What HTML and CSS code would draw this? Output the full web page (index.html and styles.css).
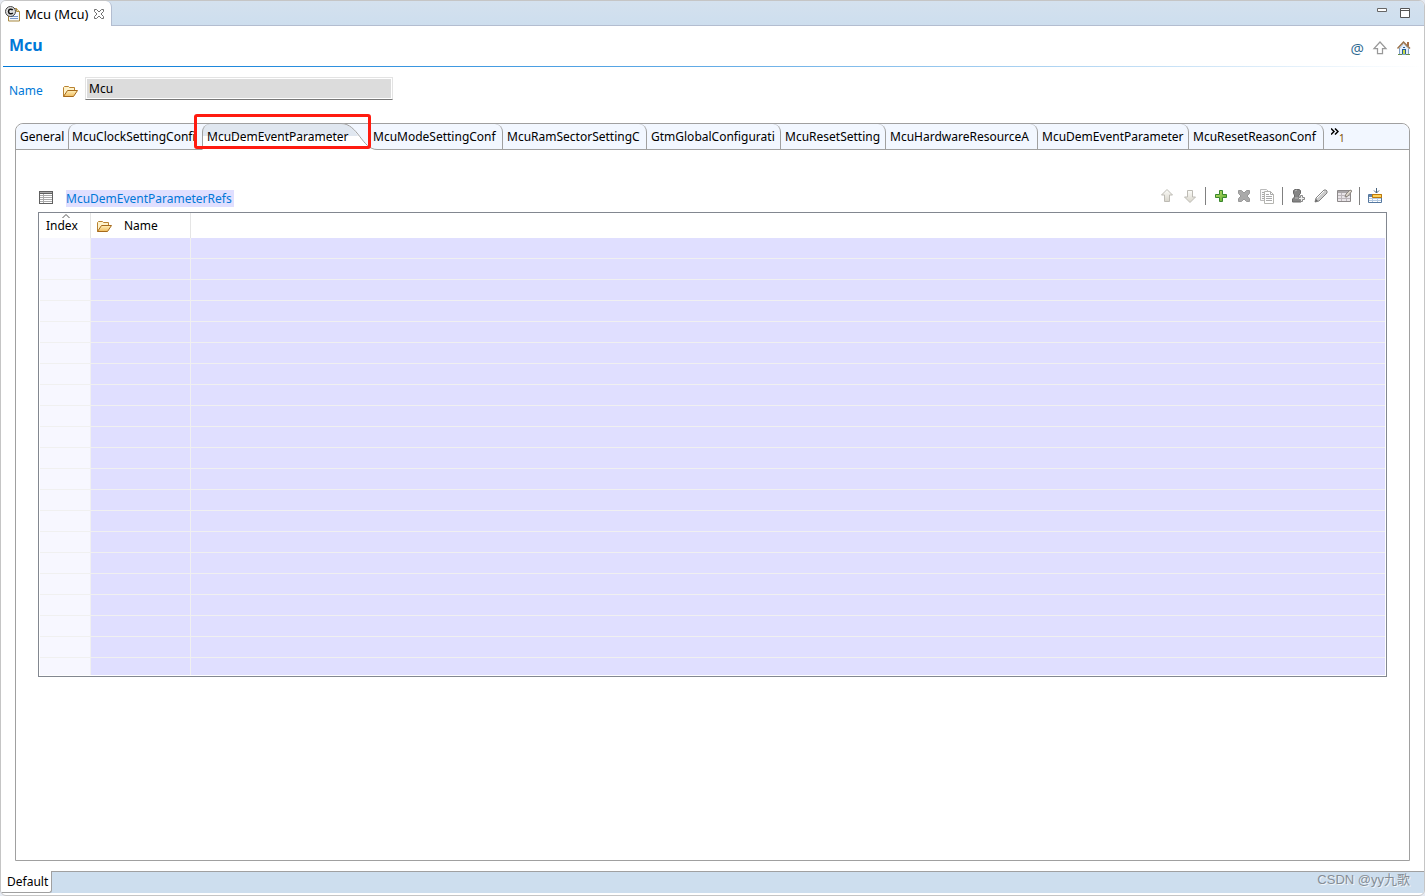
FILE: index.html
```html
<!DOCTYPE html>
<html lang="en">
<head>
<meta charset="utf-8">
<title>Mcu (Mcu)</title>
<link rel="stylesheet" href="styles.css">
</head>
<body>
<svg class="defs" aria-hidden="true">
  <defs>
    <linearGradient id="gold" x1="0" y1="0" x2="0" y2="1"><stop offset="0" stop-color="#fff0bb"/><stop offset="1" stop-color="#efbb5d"/></linearGradient>
    <linearGradient id="silver" x1="0" y1="0" x2="0" y2="1"><stop offset="0" stop-color="#fcfcf9"/><stop offset="1" stop-color="#d8d5cb"/></linearGradient>
    <linearGradient id="green" x1="0" y1="0" x2="1" y2="1"><stop offset="0" stop-color="#c5e36c"/><stop offset="1" stop-color="#55a62f"/></linearGradient>
    <symbol id="folder" viewBox="0 0 16 16">
      <path d="M1.500 13.500V4.500l1-1h4l1 1h5v3" fill="#fff3cb" stroke="#b98231"/>
      <path d="M1.500 13.500L5.500 7.500h10l-4 6z" fill="url(#gold)" stroke="#a66a1c"/>
    </symbol>
  </defs>
</svg>
<main class="editor">
  <header class="titlebar">
    <div class="file-tab">
      <svg class="icon" viewBox="0 0 16 16">
        <path d="M3.500 2.500h8l3 3v9.500h-11z" fill="#f4f8ff" stroke="#a9893f"/>
        <path d="M11.500 2.500v3h3" fill="#e8d8a4" stroke="#a9893f"/>
        <path d="M5 10.500h8M5 12.500h8" stroke="#7695c8"/>
        <circle cx="5.500" cy="5.500" r="5" fill="#ddd" stroke="#444"/>
        <path d="M7.800 4C6.300 2.500 3.500 3 3.500 5.500s2.800 3 4.300 1.500" fill="none" stroke="#111" stroke-width="1.500"/>
      </svg>
      <span>Mcu (Mcu)</span>
      <button class="plain" aria-label="Close">
        <svg class="close" viewBox="0 0 12 12"><path d="M1.500 1.500h2l2.500 2.500 2.500-2.500h2v2l-2.500 2.500 2.500 2.500v2h-2l-2.500-2.500-2.500 2.500h-2v-2l2.500-2.500-2.500-2.500z" fill="#fff" stroke="#707070"/></svg>
      </button>
    </div>
    <div class="window-buttons">
      <button class="plain" aria-label="Minimize"><svg class="window-icon" viewBox="0 0 12 12"><path d="M1.500 1.500h9v3h-9z" fill="#fff" stroke="#666"/></svg></button>
      <button class="plain" aria-label="Maximize"><svg class="window-icon" viewBox="0 0 12 12"><path d="M1.500 1.500h9v9h-9zM1 3.500h10" fill="#fff" stroke="#555"/></svg></button>
    </div>
  </header>

  <section class="heading">
    <h1>Mcu</h1>
    <nav class="heading-tools">
      <button class="plain at" aria-label="Annotations">@</button>
      <button class="plain" aria-label="Up"><svg class="icon" viewBox="0 0 16 16"><path d="M8 2l6 6.500h-3.500v5h-5v-5H2z" fill="#fff" stroke="#999" stroke-width="1.250"/></svg></button>
      <button class="plain" aria-label="Home"><svg class="icon" viewBox="0 0 16 16">
        <path d="M11 2h2v4h-2z" fill="#a86d43"/>
        <path d="M3.500 8L7.500 3.500l5 5v6h-9z" fill="#e4eefb" stroke="#7fa0c5"/>
        <path d="M1.500 8.500l6-6.500 6.500 6.500" fill="none" stroke="#99724c" stroke-width="1.500"/><path d="M2.500 8.500l5-5 5 5" fill="none" stroke="#f0c99c" stroke-dasharray="1 1"/>
        <path d="M7 7h2v1H7zM6 9h4v5H6z" fill="#265d93"/><path d="M7 10h2v4H7z" fill="#c8dc4c"/>
        <path d="M2 14.500h4M10 14.500h4" stroke="#668b4a"/>
      </svg></button>
    </nav>
  </section>

  <div class="name-row">
    <label for="mcu-name">Name</label>
    <svg class="icon"><use href="#folder"/></svg>
    <input id="mcu-name" type="text" value="Mcu" readonly>
  </div>

  <section class="panel">
    <div class="tabs" role="tablist">
      <button class="tab" role="tab">General</button>
      <button class="tab left" role="tab">McuClockSettingConfi</button>
      <button class="tab active" role="tab" aria-selected="true">
        <svg class="slope" viewBox="0 0 40 27"><path d="M0 .500h4C21 .500 25 26.500 40 26.500V27H0z" fill="#fff"/><path d="M0 1h4C13 1 17 7 21 13H0z" fill="#e0e7f0"/><path d="M0 .500h4C21 .500 25 26.500 40 26.500" fill="none" stroke="#a0a0a0"/></svg>
        <span class="tab-name">McuDemEventParameter</span>
        <span class="marker"></span>
      </button>
      <button class="tab right after" role="tab">McuModeSettingConf</button>
      <button class="tab right" role="tab">McuRamSectorSettingC</button>
      <button class="tab right" role="tab">GtmGlobalConfigurati</button>
      <button class="tab right" role="tab">McuResetSetting</button>
      <button class="tab right" role="tab">McuHardwareResourceA</button>
      <button class="tab right" role="tab">McuDemEventParameter</button>
      <button class="tab right" role="tab">McuResetReasonConf</button>
      <button class="more" aria-label="1 more tab"><svg class="chevrons" viewBox="0 0 8 7"><path d="M0 .500l3 3-3 3M4 .500l3 3-3 3" fill="none" stroke="#000" stroke-width="1.500"/></svg><span>1</span></button>
    </div>

    <div class="content">
      <div class="list-head">
        <svg class="icon" viewBox="0 0 16 16" shape-rendering="crispEdges"><path d="M1 1h14v13H1z" fill="#606060"/><path d="M2 4h12v9H2z" fill="#fff"/><path d="M2 2h12v1H2z" fill="#aaa"/><path d="M2 5.500h12M2 7.500h12M2 9.500h12M2 11.500h12M5.500 4v9" stroke="#aaa"/></svg>
        <h2>McuDemEventParameterRefs</h2>
        <div class="toolbar">
          <button class="plain" aria-label="Move up"><svg class="icon" viewBox="0 0 16 16"><path d="M8 1.500l5.500 5.500h-3v6.500h-5V7h-3z" fill="url(#silver)" stroke="#bdbbb4"/></svg></button>
          <button class="plain" aria-label="Move down"><svg class="icon" viewBox="0 0 16 16"><path d="M8 14.500L2.500 9h3V2.500h5V9h3z" fill="url(#silver)" stroke="#bdbbb4"/></svg></button>
          <span class="separator"></span>
          <button class="plain" aria-label="Add"><svg class="icon" viewBox="0 0 16 16"><path d="M6.500 2.500h3v4h4v3h-4v4h-3v-4h-4v-3h4z" fill="url(#green)" stroke="#39872c"/></svg></button>
          <button class="plain" aria-label="Delete"><svg class="icon" viewBox="0 0 16 16"><path d="M2.500 2.500h3L8 5l2.500-2.500h3v3L11 8l2.500 2.500v3h-3L8 11l-2.500 2.500h-3v-3L5 8 2.500 5.500z" fill="#aaa" stroke="#999"/></svg></button>
          <button class="plain" aria-label="Copy"><svg class="icon" viewBox="0 0 16 16"><path d="M1.500 1.500h6l2 2v9h-8z" fill="#fafafa" stroke="#bbb"/><path d="M3 4.500h2M3 6.500h2M3 8.500h2M3 10.500h2" stroke="#aaa"/><path d="M5.500 3.500h6l3 3v9h-9z" fill="#fff" stroke="#b5b5b0"/><path d="M11.500 3.500v3h3M7 6.500h3M7 8.500h6M7 10.500h6M7 12.500h6" fill="none" stroke="#aaa"/></svg></button>
          <span class="separator"></span>
          <button class="plain" aria-label="Add user value"><svg class="icon" viewBox="0 0 16 16"><path d="M5 1.500h4l1.500 1v3L9 7v2l2 2v3H2.500v-3l2-2V7l-1-1.500v-3z" fill="#858585" stroke="#696969"/><path d="M5 3l2-1M5 10h3" stroke="#bbb"/><path d="M10.500 7.500h2v2h2v2h-2v2h-2v-2h-2v-2h2z" fill="#eee" stroke="#888"/></svg></button>
          <button class="plain" aria-label="Edit"><svg class="icon" viewBox="0 0 16 16"><path d="M2 14l1-4 8-8h2l1 1v2l-8 8z" fill="#ccc" stroke="#858585"/><path d="M4 10l7-7" stroke="#fff"/><path d="M2 14l1-3 2 2z" fill="#666"/></svg></button>
          <button class="plain" aria-label="Edit table"><svg class="icon" viewBox="0 0 16 16"><path d="M1.500 2.500h13v11h-13z" fill="#e8e4e7" stroke="#8c8889"/><path d="M2 4h12" stroke="#aaa6a8" stroke-width="2"/><path d="M2 7.500h12M2 10.500h12M5.500 5v8M10.500 5v8" stroke="#bcb6bb"/><path d="M9 9l1-3 4-4 2 1-4 5z" fill="#ddd6cb" stroke="#8b8580"/></svg></button>
          <span class="separator"></span>
          <button class="plain" aria-label="Column layout"><svg class="icon" viewBox="0 0 16 16"><path d="M1.500 6.500h13v8h-13z" fill="#fff" stroke="#54779f"/><path d="M2 10.500h12M2 12.500h12M5.500 7v7M10.500 7v7" stroke="#b4cae2"/><path d="M2 7h4v2H2z" fill="#6685a8"/><path d="M5.500 6.500h9v3h-9z" fill="#ffd35d" stroke="#bf7a08"/><path d="M9.500 0v5M7 2.500l2.500 2.500L12 2.500" fill="none" stroke="#48647f"/></svg></button>
        </div>
      </div>
      <div class="table-box">
        <table>
          <thead><tr>
            <th class="index"><svg class="sort" viewBox="0 0 8 4"><path d="M.500 4L4 .500 7.500 4" fill="none" stroke="#555"/></svg>Index</th>
            <th class="name"><span class="th-name"><svg class="icon"><use href="#folder"/></svg>Name</span></th>
            <th></th>
          </tr></thead>
          <tbody>
            <tr><td></td><td></td><td></td></tr><tr><td></td><td></td><td></td></tr>
            <tr><td></td><td></td><td></td></tr><tr><td></td><td></td><td></td></tr>
            <tr><td></td><td></td><td></td></tr><tr><td></td><td></td><td></td></tr>
            <tr><td></td><td></td><td></td></tr><tr><td></td><td></td><td></td></tr>
            <tr><td></td><td></td><td></td></tr><tr><td></td><td></td><td></td></tr>
            <tr><td></td><td></td><td></td></tr><tr><td></td><td></td><td></td></tr>
            <tr><td></td><td></td><td></td></tr><tr><td></td><td></td><td></td></tr>
            <tr><td></td><td></td><td></td></tr><tr><td></td><td></td><td></td></tr>
            <tr><td></td><td></td><td></td></tr><tr><td></td><td></td><td></td></tr>
            <tr><td></td><td></td><td></td></tr><tr><td></td><td></td><td></td></tr>
            <tr class="last"><td></td><td></td><td></td></tr>
          </tbody>
        </table>
      </div>
    </div>
  </section>

  <footer class="footer">
    <button class="page-tab">Default</button>
    <span class="watermark">CSDN @yy九歌</span>
  </footer>
</main>
</body>
</html>
```
FILE: styles.css
```css
* { box-sizing: border-box; }
body {
  margin: 0;
  background: #e6eaf2;
  color: #000;
  font: 12px/16px "Noto Sans", "Noto Sans CJK SC", sans-serif;
}
button, input { font: inherit; color: inherit; }
.defs { position: absolute; width: 0; height: 0; }
.icon { display: block; flex: none; width: 16px; height: 16px; }
.plain { display: block; padding: 0; border: 0; background: none; }

.editor {
  display: flex;
  flex-direction: column;
  min-height: 100vh;
  padding-bottom: 2px;
  border: 1px solid #c5c5c5;
  border-radius: 6px;
  background: #fff;
  overflow: hidden;
}
.titlebar {
  display: flex;
  justify-content: space-between;
  height: 25px;
  background: linear-gradient(#d4e1ee, #cddeee);
}
.file-tab {
  display: flex;
  align-items: center;
  gap: 4px;
  padding: 1px 6px 0 4px;
  border-right: 1px solid #b3bdd0;
  border-top-right-radius: 6px;
  background: #fff;
  font-size: 13px;
}
.close { display: block; width: 12px; height: 12px; margin-left: 1px; }
.window-buttons {
  display: flex;
  flex: 1;
  align-items: flex-start;
  justify-content: flex-end;
  gap: 11px;
  padding: 6px 13px 0 0;
  border-bottom: 1px solid #b3bdd0;
}
.window-icon { display: block; width: 12px; height: 12px; }

.heading {
  display: flex;
  justify-content: space-between;
  height: 41px;
  margin: 0 2px;
  padding: 8px 10px 0 6px;
  border-bottom: 1px solid;
  border-image: linear-gradient(to right, #0078d7, #64ace6 50%, #fff) 1;
}
h1 { margin: 0; color: #0078d7; font-size: 16px; line-height: 22px; }
.heading-tools { display: flex; align-items: center; gap: 8px; height: 28px; }
.at { color: #2c6890; font-family: "Open Sans", sans-serif; font-size: 15px; }

.name-row { display: flex; align-items: center; height: 48px; padding-left: 8px; }
.name-row label { width: 53px; color: #0078d7; }
.name-row input {
  width: 308px;
  height: 23px;
  margin: 0 0 5px 7px;
  padding: 0 3px;
  border: 1px solid #e3e3e3;
  border-bottom-color: #777;
  outline: 0;
  background: #dcdcdc;
  box-shadow: inset 0 0 0 1px #fff;
}

.panel {
  display: flex;
  flex: 1;
  flex-direction: column;
  margin: 8px 14px 10px;
  border: 1px solid #a0a0a0;
  border-radius: 8px 8px 0 0;
}
.tabs {
  display: grid;
  grid-template-columns: 52px 134px 169px 132px 144px 134px 105px 152px 151px 135px 1fr;
  height: 26px;
  border-radius: 8px 8px 0 0;
  background: #f2f7ff;
}
.tab, .more {
  min-width: 0;
  padding: 0 0 0 4px;
  border: 0;
  border-bottom: 1px solid #a0a0a0;
  background: none;
  text-align: left;
  white-space: nowrap;
}
.tab.left { padding-left: 3px; border-left: 1px solid #a0a0a0; border-top-left-radius: 8px; }
.tab.right { border-right: 1px solid #a0a0a0; border-top-right-radius: 8px; }
.tab.after { padding-left: 2px; }
.tab.active {
  position: relative;
  padding-left: 4px;
  border-left: 1px solid #a0a0a0;
  border-bottom-color: #fff;
  border-top-left-radius: 8px;
  background: linear-gradient(to right, transparent 135px, #f2f7ff 135px), linear-gradient(#e0e7f0 12px, #fff 12px);
}
.slope { position: absolute; top: -1px; right: -6px; width: 40px; height: 27px; }
.tab-name { position: relative; }
.marker {
  position: absolute;
  inset: -10px 0 0 -9px;
  border: 3px solid #ff1b10;
  border-radius: 3px;
}
.more { display: flex; gap: 0; padding: 4px 0 0 7px; }
.more span { padding-top: 2px; font-size: 10px; line-height: 16px; color: #7b4b00; }
.chevrons { width: 8px; height: 7px; }

.content { padding: 34px 22px 0; }
.list-head { display: flex; align-items: center; height: 28px; }
h2 { margin: 0 0 0 12px; padding-right: 2px; background: #e0dfff; color: #0078d7; font-size: 12px; font-weight: 400; line-height: 17px; }
.toolbar { display: flex; align-items: center; gap: 7px; margin: 0 4px 4px auto; }
.separator { width: 1px; height: 18px; background: #808080; }
.table-box { border: 1px solid #828790; padding: 0 1px 1px; }
table { width: 100%; border-collapse: separate; border-spacing: 0; table-layout: fixed; }
th { position: relative; height: 25px; padding: 0 0 0 6px; border-right: 1px solid #e5e5e5; font-weight: 400; text-align: left; }
th.index { width: 51px; }
th.name { width: 100px; padding-left: 5px; }
th:last-child { border-right: 0; }
.th-name { display: flex; align-items: center; gap: 12px; }
.sort { position: absolute; top: 1px; left: 22px; width: 8px; height: 4px; }
td { height: 21px; padding: 0; border-right: 1px solid #f0f0f0; border-bottom: 1px solid #f0f0f0; background: #e0dfff; }
td:first-child { background: #f7f7ff; }
td:last-child { border-right: 0; }
.last td { height: 17px; border-bottom: 0; }

.footer {
  display: flex;
  justify-content: space-between;
  height: 22px;
  background: #cddeee;
  box-shadow: inset 0 1px #a0a0a0;
}
.page-tab { padding: 0 3px 0 6px; border: 0; border-right: 1px solid #a0a0a0; border-bottom: 1px solid #a0a0a0; border-bottom-right-radius: 3px; background: #fff; }
.watermark { padding: 0 14px 5px 0; color: #858d96; font: 13px/17px "Liberation Sans", "Noto Sans CJK SC", sans-serif; text-shadow: 1px 1px #f2f5f8; }
```
